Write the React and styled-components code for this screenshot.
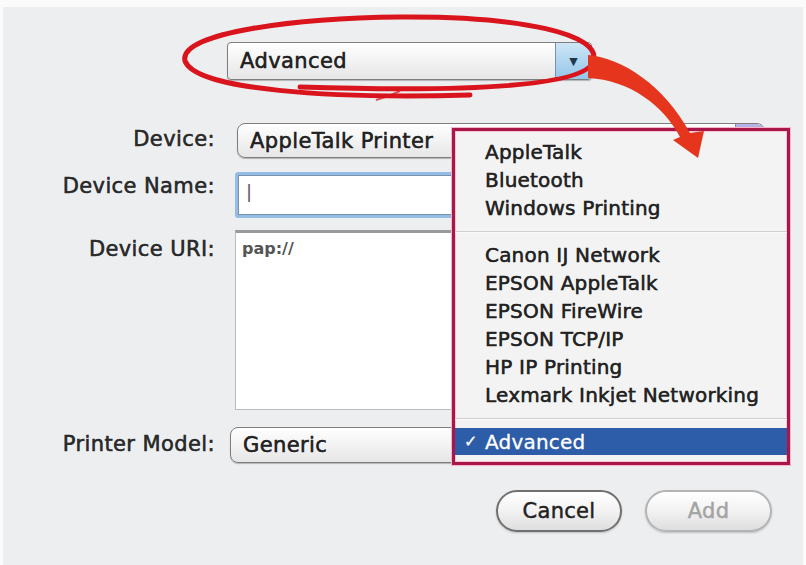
import React from "react"
import styled, { createGlobalStyle } from "styled-components"

const GlobalStyle = createGlobalStyle`
  html, body {
    margin: 0;
    padding: 0;
    background: #fbfbfb;
  }
  body {
    font-family: "DejaVu Sans", "Noto Sans", sans-serif;
    color: #262626;
  }
`

// Lucida-style dark UI text, slightly heavier than regular
const heavy = `
  -webkit-text-stroke: 0.45px currentColor;
  text-shadow: 0 0 0.6px rgba(0, 0, 0, 0.5);
`

const Page = styled.div`
  width: 806px;
  height: 565px;
  padding-top: 7px;
  box-sizing: border-box;
  overflow: hidden;
`

const Sheet = styled.div`
  position: relative;
  margin: 0 3px;
  height: 558px;
  background: #eceef0;
  padding: 35px 38px 0 0;
  box-sizing: border-box;
  display: flex;
  flex-direction: column;
`

const Popup = styled.div`
  display: flex;
  align-items: center;
  height: ${p => p.$h}px;
  width: ${p => (p.$w ? `${p.$w}px` : "auto")};
  margin-left: ${p => p.$left || 0}px;
  box-sizing: border-box;
  border: 1px solid #7e7e7e;
  border-radius: ${p => p.$radius}px;
  background: linear-gradient(#ffffff, #f1f1f1 55%, #e6e6e6);
  box-shadow: 0 1px 1px rgba(0, 0, 0, 0.25);
  overflow: hidden;
`

const PopupText = styled.span`
  flex: 1;
  padding-left: 12px;
  font-size: 21px;
  letter-spacing: 0.4px;
  color: #222;
  ${heavy}
`

const ArrowCap = styled.span`
  align-self: stretch;
  width: ${p => p.$w}px;
  display: flex;
  align-items: center;
  justify-content: center;
  background: ${p => p.$tone};
  border-left: 1px solid #7b8fa8;
  color: #23364f;
  font-size: 11px;
`

const TopRow = styled.div`
  display: flex;
`

const Row = styled.div`
  display: grid;
  grid-template-columns: 212px 1fr;
  column-gap: 20px;
  align-items: start;
  margin-top: ${p => p.$top}px;
`

const Label = styled.div`
  text-align: right;
  font-size: 21px;
  letter-spacing: 0.4px;
  color: #2a2a2a;
  ${heavy}
  padding-top: ${p => p.$pad}px;
  white-space: nowrap;
`

const TextField = styled.div`
  height: 46px;
  box-sizing: border-box;
  border: 3px solid #95bde3;
  border-radius: 3px;
  background: #fff;
  box-shadow: inset 0 0 0 1px #7891ad;
  padding: 6px 8px;
  font-size: 18px;
  color: #555;
`

const TextArea = styled.div`
  height: 180px;
  box-sizing: border-box;
  background: #fff;
  border: 1px solid #bdbdbd;
  border-top: 3px solid #9a9a9a;
  padding: 6px 6px;
  font-size: 16px;
  font-weight: bold;
  color: #555;
`

const Buttons = styled.div`
  display: flex;
  justify-content: flex-end;
  gap: 23px;
  margin-top: 27px;
  margin-right: -7px;
`

const Pill = styled.button`
  width: ${p => p.$w}px;
  height: 42px;
  border-radius: 21px;
  border: 2px solid ${p => (p.$off ? "#b4b4b4" : "#707070")};
  background: linear-gradient(#ffffff, #f2f2f2 50%, #dedede);
  box-shadow: 0 1px 2px rgba(0, 0, 0, 0.2);
  font-family: "DejaVu Sans", sans-serif;
  font-size: 21px;
  letter-spacing: 0.3px;
  color: ${p => (p.$off ? "#a3a3a3" : "#222")};
  -webkit-text-stroke: 0.45px currentColor;
  padding: 0;
`

const Menu = styled.div`
  position: absolute;
  left: 449px;
  top: 121px;
  width: 338px;
  height: 337px;
  box-sizing: border-box;
  border: 3px solid #a8164a;
  box-shadow: 0 0 0 1px #f2b6c8, inset 0 0 0 1px #f4c4d2;
  background: #f3f3f3;
  padding: 7px 0 0;
`

const Item = styled.div`
  height: 28px;
  display: flex;
  align-items: center;
  padding-left: 30px;
  font-size: 20px;
  letter-spacing: 0.2px;
  color: #222;
  ${heavy}
  white-space: nowrap;
`

const Separator = styled.div`
  height: ${p => p.$h}px;
  display: flex;
  align-items: center;
  &::after {
    content: "";
    flex: 1;
    height: 1px;
    background: #cfcfcf;
    box-shadow: 0 1px 0 #fafafa;
  }
`

const Chosen = styled.div`
  position: relative;
  height: 27px;
  display: flex;
  align-items: center;
  padding-left: 30px;
  background: #2d5ca8;
  color: #fff;
  font-size: 20px;
  letter-spacing: 0.2px;
  -webkit-text-stroke: 0.3px currentColor;
`

const Tick = styled.span`
  position: absolute;
  left: 9px;
  font-size: 16px;
`

const Marks = styled.svg`
  position: absolute;
  left: -3px;
  top: -7px;
  width: 806px;
  height: 565px;
  pointer-events: none;
`

const firstGroup = ["AppleTalk", "Bluetooth", "Windows Printing"]
const secondGroup = [
  "Canon IJ Network",
  "EPSON AppleTalk",
  "EPSON FireWire",
  "EPSON TCP/IP",
  "HP IP Printing",
  "Lexmark Inkjet Networking",
]

export default function App() {
  return (
    <Page>
      <GlobalStyle />
      <Sheet>
        <TopRow>
          <Popup $h={38} $w={365} $left={224} $radius={4}>
            <PopupText>Advanced</PopupText>
            <ArrowCap $w={35} $tone="linear-gradient(#cde6f7, #94c6ea)">▼</ArrowCap>
          </Popup>
        </TopRow>

        <Row $top={43}>
          <Label $pad={4}>Device:</Label>
          <Popup $h={35} $left={2} $radius={8}>
            <PopupText>AppleTalk Printer</PopupText>
            <ArrowCap $w={28} $tone="linear-gradient(#b9b4e6, #7e8ad0)" />
          </Popup>
        </Row>

        <Row $top={14}>
          <Label $pad={2}>Device Name:</Label>
          <TextField>|</TextField>
        </Row>

        <Row $top={12}>
          <Label $pad={7}>Device URI:</Label>
          <TextArea>pap://</TextArea>
        </Row>

        <Row $top={17}>
          <Label $pad={5}>Printer Model:</Label>
          <Popup $h={36} $w={258} $left={-5} $radius={8}>
            <PopupText>Generic</PopupText>
            <ArrowCap $w={30} $tone="linear-gradient(#6f9ad8, #2d5fb4)" />
          </Popup>
        </Row>

        <Buttons>
          <Pill $w={126}>Cancel</Pill>
          <Pill $w={127} $off>
            Add
          </Pill>
        </Buttons>

        <Menu>
          {firstGroup.map(name => (
            <Item key={name}>{name}</Item>
          ))}
          <Separator $h={19} />
          {secondGroup.map(name => (
            <Item key={name}>{name}</Item>
          ))}
          <Separator $h={19} />
          <Chosen>
            <Tick>✓</Tick>Advanced
          </Chosen>
        </Menu>

        {/* hand-drawn highlight ring and pointer arrow */}
        <Marks viewBox="0 0 806 565">
          <path
            d="M470 95 C330 99 196 90 185 61 C178 32 300 18 400 17 C520 16 604 34 593 62 C585 84 490 93 300 87"
            fill="none"
            stroke="#d9141c"
            strokeWidth="5"
            strokeLinecap="round"
          />
          <path
            d="M400 91 C392 95 384 98 376 100"
            fill="none"
            stroke="#d9141c"
            strokeWidth="2"
            opacity="0.7"
          />
          <path
            d="M588 55 C622 58 664 85 690 133 L704 131 L698 158 L673 140 L680 137 C664 106 630 80 588 78 Z"
            fill="#e5361d"
          />
        </Marks>
      </Sheet>
    </Page>
  )
}
